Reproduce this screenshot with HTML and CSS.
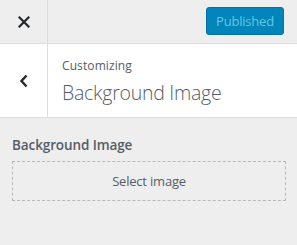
FILE: index.html
```html
<!DOCTYPE html>
<html>
<head>
<meta charset="utf-8">
<link rel="stylesheet" href="styles.css">
</head>
<body>
<div class="panel">
  <div class="topbar">
    <div class="close">
      <svg width="12" height="12" viewBox="0 0 12 12"><path d="M1.5 1.5 L10.5 10.5 M10.5 1.5 L1.5 10.5" stroke="#23282d" stroke-width="2.2" stroke-linecap="square"/></svg>
    </div>
    <div class="actions">
      <button class="publish">Published</button>
    </div>
  </div>
  <div class="header">
    <div class="back">
      <svg width="10" height="14" viewBox="0 0 10 14"><path d="M7.5 1.5 L2.5 7 L7.5 12.5" fill="none" stroke="#23282d" stroke-width="2.4"/></svg>
    </div>
    <div class="titles">
      <div class="crumb">Customizing</div>
      <div class="title">Background Image</div>
    </div>
  </div>
  <div class="section">
    <div class="label">Background Image</div>
    <div class="placeholder">Select image</div>
  </div>
</div>
</body>
</html>
```

FILE: styles.css
```css
* { box-sizing: border-box; }
html, body { margin: 0; padding: 0; }
body {
  background: #eeeeee;
  font-family: "Open Sans", "Noto Sans", sans-serif;
  color: #555d66;
  width: 297px;
  height: 245px;
  overflow: hidden;
}
.topbar {
  display: flex;
  height: 44px;
  border-bottom: 1px solid #dddddd;
  background: #eeeeee;
}
.close {
  width: 48px;
  border-right: 1px solid #dddddd;
  display: flex;
  align-items: center;
  justify-content: center;
  padding-top: 1px;
}
.actions {
  flex: 1;
  display: flex;
  justify-content: flex-end;
  align-items: flex-start;
  padding: 7px 13px 0 0;
}
.publish {
  width: 78px;
  height: 28px;
  background: #0085ba;
  border: 1px solid #0073aa;
  border-radius: 3px;
  color: #66c6e4;
  font-family: inherit;
  font-size: 13px;
  padding: 0;
  letter-spacing: -0.2px;
}
.header {
  display: flex;
  height: 74px;
  background: #ffffff;
  border-bottom: 1px solid #dddddd;
}
.back {
  width: 48px;
  border-right: 1px solid #dddddd;
  display: flex;
  align-items: center;
  justify-content: center;
}
.titles {
  padding: 14px 0 0 14px;
}
.crumb {
  font-size: 12px;
  line-height: 16px;
  color: #555d66;
  letter-spacing: 0.1px;
}
.title {
  font-size: 19.5px;
  font-weight: 300;
  line-height: 26px;
  margin-top: 6px;
  color: #555d66;
  letter-spacing: -0.25px;
}
.section {
  padding: 18px 11px 0 12px;
}
.label {
  font-size: 13.5px;
  font-weight: 600;
  line-height: 18px;
  color: #555d66;
  letter-spacing: -0.1px;
}
.placeholder {
  margin-top: 7px;
  height: 40px;
  border: 1px dashed #b4b9be;
  display: flex;
  align-items: center;
  justify-content: center;
  font-size: 13px;
  color: #555d66;
  letter-spacing: -0.2px;
}
```
